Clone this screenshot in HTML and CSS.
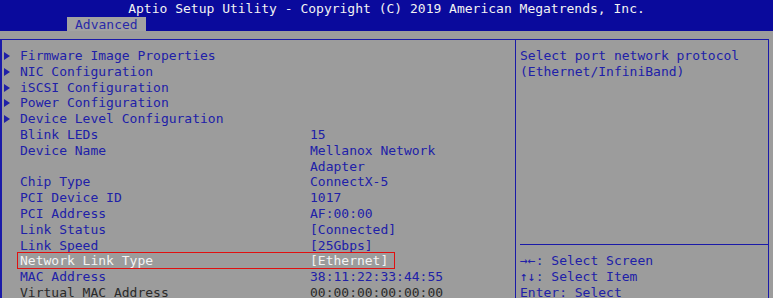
FILE: index.html
```html
<!DOCTYPE html>
<html lang="en">
<head>
    <meta charset="UTF-8">
    <title>Aptio Setup Utility</title>
    <link rel="stylesheet" href="styles.css">
</head>
<body>
    <div class="header">
        <div class="title">Aptio Setup Utility - Copyright (C) 2019 American Megatrends, Inc.</div>
        <div class="tabs"><span class="tab">Advanced</span></div>
    </div>

    <div class="frame">
        <div class="main">
            <div class="row"><span class="arrow"></span><span>Firmware Image Properties</span></div>
            <div class="row"><span class="arrow"></span><span>NIC Configuration</span></div>
            <div class="row"><span class="arrow"></span><span>iSCSI Configuration</span></div>
            <div class="row"><span class="arrow"></span><span>Power Configuration</span></div>
            <div class="row"><span class="arrow"></span><span>Device Level Configuration</span></div>
            <div class="row"><span></span><span>Blink LEDs</span><span class="val">15</span></div>
            <div class="row"><span></span><span>Device Name</span><span class="val">Mellanox Network Adapter</span></div>
            <div class="row"><span></span><span>Chip Type</span><span class="val">ConnectX-5</span></div>
            <div class="row"><span></span><span>PCI Device ID</span><span class="val">1017</span></div>
            <div class="row"><span></span><span>PCI Address</span><span class="val">AF:00:00</span></div>
            <div class="row"><span></span><span>Link Status</span><span class="val">[Connected]</span></div>
            <div class="row"><span></span><span>Link Speed</span><span class="val">[25Gbps]</span></div>
            <div class="row selected"><span></span><span>Network Link Type</span><span class="val">[Ethernet]</span></div>
            <div class="row"><span></span><span>MAC Address</span><span class="val">38:11:22:33:44:55</span></div>
            <div class="row disabled"><span></span><span>Virtual MAC Address</span><span class="val">00:00:00:00:00:00</span></div>
        </div>
        <div class="side">
            <div class="help">Select port network protocol<br>(Ethernet/InfiniBand)</div>
            <div class="keys">
                <div>→←: Select Screen</div>
                <div>↑↓: Select Item</div>
                <div>Enter: Select</div>
            </div>
        </div>
    </div>
</body>
</html>
```

FILE: styles.css
```css
body {
    margin: 0;
    background: #9c9c9c;
    color: #2020a8;
    font-family: "DejaVu Sans Mono", "Liberation Mono", monospace;
    font-size: 13px;
    overflow: hidden;
}

.header { background: #0a0a9c; height: 31px; }
.title { color: #f2f2f2; text-align: center; line-height: 17px; white-space: pre; }
.tabs { height: 14px; display: flex; }
.tab {
    margin-left: 67px;
    padding: 0 8px;
    line-height: 15px;
    background: #a2a2a2;
    color: #2a2aa8;
}

.frame {
    margin: 8px 4px 0 0;
    border-top: 1px solid #1a1aa8;
    border-left: 2px solid #1a1aa8;
    border-right: 1px solid #1a1aa8;
    height: 258px;
    display: flex;
}

.main {
    width: 513px;
    border-right: 1px solid #1a1aa8;
    padding-top: 8px;
}

.row {
    display: grid;
    grid-template-columns: 18px 290px 140px;
    line-height: 15.8px;
    position: relative;
}

.arrow {
    width: 0;
    height: 0;
    margin: 4px 0 0 2px;
    border-left: 6px solid #2020a8;
    border-top: 4px solid transparent;
    border-bottom: 4px solid transparent;
}

.selected { color: #f4f4f4; }
.selected::after {
    content: "";
    position: absolute;
    left: 15px;
    top: -1px;
    width: 376px;
    height: 15px;
    border: 1px solid #e01010;
}

.disabled { color: #2a2a2a; }

.side { flex: 1; padding-top: 8px; }
.help { min-height: 196px; padding-left: 4px; line-height: 15.8px; }
.keys {
    margin-left: 4px;
    border-top: 1px solid #1a1aa8;
    padding-top: 8px;
    line-height: 15.8px;
}
```
